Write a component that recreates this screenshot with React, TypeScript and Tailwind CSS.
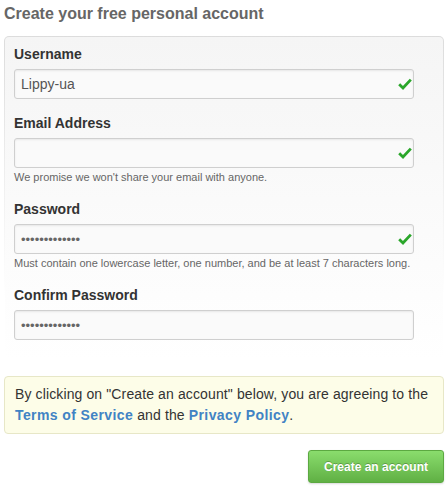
import React from "react";

const CheckMark: React.FC = () => (
  <svg
    className="absolute right-[2px] top-[9px]"
    width="14"
    height="12"
    viewBox="0 0 14 12"
    fill="none"
  >
    <path d="M1.2 6.2 L5 10 L12.8 1.6" stroke="#2aa62a" strokeWidth="2.8" />
  </svg>
);

type FieldProps = {
  label: string;
  value: string;
  type?: string;
  check?: boolean;
  help?: string;
  first?: boolean;
};

const Field: React.FC<FieldProps> = ({ label, value, type = "text", check, help, first }) => (
  <div className={first ? "" : "mt-[14px]"}>
    <label className="block text-[14px] leading-[20px] font-bold text-[#333]">{label}</label>
    <div className="relative mt-[5px] w-[400px]">
      <input
        type={type}
        value={value}
        readOnly
        className={
          type === "password"
            ? "block h-[30px] w-full rounded-[3px] border border-[#cfcfcf] bg-[#fafafa] px-[6px] text-[13px] text-[#666] shadow-[inset_0_1px_2px_rgba(0,0,0,0.075)] outline-none"
            : "block h-[30px] w-full rounded-[3px] border border-[#cfcfcf] bg-[#fafafa] px-[6px] text-[14px] text-[#555] shadow-[inset_0_1px_2px_rgba(0,0,0,0.075)] outline-none"
        }
      />
      {check && <CheckMark />}
    </div>
    {help && <p className="mt-[2px] text-[11px] leading-[15px] text-[#666]">{help}</p>}
  </div>
);

export default function App() {
  return (
    <div className="h-[487px] w-[448px] bg-white px-[4px] font-['Liberation_Sans',Arial,sans-serif]">
      {/* Title */}
      <h2 className="pt-[4px] text-[16px] leading-[20px] font-bold text-[#666]">
        Create your free personal account
      </h2>

      {/* Form panel */}
      <div className="mt-[12px] rounded-[5px] bg-linear-to-b from-[#dcdcdc] to-white to-80% p-px">
        <div className="rounded-[4px] bg-linear-to-b from-[#f5f5f5] to-white px-[9px] pt-[7px] pb-[20px]">
          <Field first label="Username" value="Lippy-ua" check />
          <Field
            label="Email Address"
            value=""
            check
            help="We promise we won't share your email with anyone."
          />
          <Field
            label="Password"
            type="password"
            value="aaaaaaaaaaaaa"
            check
            help="Must contain one lowercase letter, one number, and be at least 7 characters long."
          />
          <Field label="Confirm Password" type="password" value="aaaaaaaaaaaaa" />
        </div>
      </div>

      {/* Terms notice */}
      <div className="mt-[15px] rounded-[4px] border border-[#e7e7c7] bg-[#fdfde8] px-[10px] py-[7px] text-[14px] leading-[21px] tracking-[0.12px] text-[#333]">
        By clicking on "Create an account" below, you are agreeing to the{" "}
        <a href="#" className="font-bold tracking-[0.4px] text-[#4183c4]">Terms of Service</a> and the{" "}
        <a href="#" className="font-bold tracking-[0.4px] text-[#4183c4]">Privacy Policy</a>.
      </div>

      {/* Submit */}
      <div className="mt-[16px] flex justify-end">
        <button className="h-[33px] w-[136px] rounded-[3px] border border-[#5ca941] bg-linear-to-b from-[#8add6d] to-[#60b044] text-[12px] font-bold text-white shadow-[0_1px_2px_rgba(0,0,0,0.15)] [text-shadow:0_-1px_0_rgba(0,0,0,0.25)]">
          Create an account
        </button>
      </div>
    </div>
  );
}
